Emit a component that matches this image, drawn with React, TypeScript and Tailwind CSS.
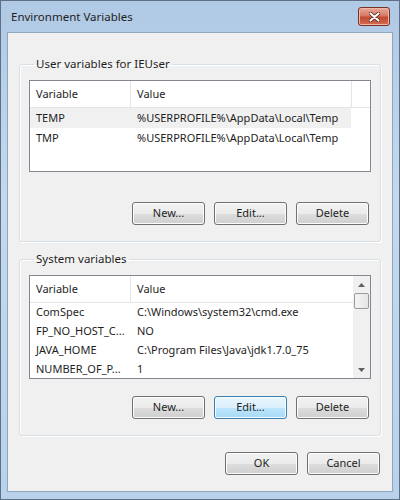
import type { ReactNode } from "react";

const font = "font-['Segoe_UI','Noto_Sans',sans-serif] text-[11px] text-[#1e1e1e]";

const btn =
  "flex h-[23px] w-[73px] items-center justify-center rounded-[3px] border border-[#707070] bg-[linear-gradient(to_bottom,#f2f2f2_0%,#ebebeb_50%,#dddddd_51%,#cfcfcf_100%)] shadow-[inset_0_0_0_1px_#fcfcfc]";
const btnFocus =
  "flex h-[23px] w-[73px] items-center justify-center rounded-[3px] border border-[#3c7fb1] bg-[linear-gradient(to_bottom,#eaf6fd_0%,#d9f0fc_50%,#bee6fd_51%,#a7d9f5_100%)] shadow-[inset_0_0_0_1px_#f4fbfe]";

type Row = { name: string; value: string; selected?: boolean };

const userVars: Row[] = [
  { name: "TEMP", value: "%USERPROFILE%\\AppData\\Local\\Temp", selected: true },
  { name: "TMP", value: "%USERPROFILE%\\AppData\\Local\\Temp" },
];

const systemVars: Row[] = [
  { name: "ComSpec", value: "C:\\Windows\\system32\\cmd.exe" },
  { name: "FP_NO_HOST_C...", value: "NO" },
  { name: "JAVA_HOME", value: "C:\\Program Files\\Java\\jdk1.7.0_75" },
  { name: "NUMBER_OF_P...", value: "1" },
];

function Group({ title, children }: { title: string; children: ReactNode }) {
  return (
    <fieldset className="rounded-[3px] border border-[#d5dfe5] px-[9px] pb-[16px] pt-[8px] shadow-[inset_1px_1px_0_#fff,1px_1px_0_#fff]">
      <legend className="ml-[5px] px-[2px] text-[11.5px] leading-[16px]">{title}</legend>
      {children}
    </fieldset>
  );
}

function Header() {
  return (
    <div className="flex h-[27px] border-b border-[#e5e5e5] bg-white">
      <div className="flex w-[101px] items-center border-r border-[#e5e5e5] pl-[6px]">Variable</div>
      <div className="flex flex-1 items-center pl-[6px]">Value</div>
    </div>
  );
}

function Rows({ rows, h }: { rows: Row[]; h: string }) {
  return (
    <>
      {rows.map((r) => (
        <div
          key={r.name}
          className={`flex ${h} items-center whitespace-nowrap ${r.selected ? "bg-[#f0f0f0]" : ""}`}
        >
          <div className="w-[101px] pl-[6px]">{r.name}</div>
          <div className="flex-1 pl-[6px]">{r.value}</div>
        </div>
      ))}
    </>
  );
}

function Buttons({ focusEdit }: { focusEdit?: boolean }) {
  return (
    <div className="flex justify-end gap-[9px] pr-[2px]">
      <div className={btn}>New...</div>
      <div className={focusEdit ? btnFocus : btn}>Edit...</div>
      <div className={btn}>Delete</div>
    </div>
  );
}

function Arrow({ up }: { up?: boolean }) {
  return (
    <div className="flex h-[17px] items-center justify-center">
      <svg width="7" height="4" viewBox="0 0 7 4">
        <path d={up ? "M0 4 L3.5 0 L7 4 Z" : "M0 0 L3.5 4 L7 0 Z"} fill="#606060" />
      </svg>
    </div>
  );
}

export default function App() {
  return (
    <div className={`${font} flex h-[500px] w-[400px] flex-col border border-[#5d7085] bg-[linear-gradient(to_bottom,#b0c9e4,#c4d9ef_40%,#b9d1ea)]`}>
      <div className="flex h-[31px] shrink-0 items-center justify-between pl-[10px] pr-[9px]">
        <span className="text-[11.5px]">Environment Variables</span>
        <div className="flex h-[19px] w-[32px] items-center justify-center rounded-[3px] border border-[#763226] bg-[linear-gradient(to_bottom,#e9a999_0%,#d77a66_45%,#c34a33_55%,#d26b4f_100%)] shadow-[inset_0_0_0_1px_#f0b6a6]">
          <svg width="11" height="10" viewBox="0 0 11 10">
            <path d="M1.5 1.5 L9.5 8.5 M9.5 1.5 L1.5 8.5" stroke="#4a1a12" strokeWidth="3.6" strokeLinecap="round" />
            <path d="M1.5 1.5 L9.5 8.5 M9.5 1.5 L1.5 8.5" stroke="#ffffff" strokeWidth="2.2" strokeLinecap="round" />
          </svg>
        </div>
      </div>
      <div className="mx-[6px] mb-[7px] flex flex-1 flex-col border border-[#8fa6bf] bg-[#f0f0f0] px-[11px] pt-[23px]">
        <Group title="User variables for IEUser">
          <div className="flex h-[92px] border border-[#828790] bg-white">
            <div className="w-[321px]">
              <Header />
              <Rows rows={userVars} h="h-[20px]" />
            </div>
            <div className="h-[27px] flex-1 border-b border-l border-[#e5e5e5] bg-white" />
          </div>
          <div className="mt-[30px]">
            <Buttons />
          </div>
        </Group>
        <div className="mt-[9px]">
          <Group title="System variables">
            <div className="flex h-[104px] border border-[#828790] bg-white">
              <div className="flex-1 overflow-hidden">
                <Header />
                <Rows rows={systemVars} h="h-[19px]" />
              </div>
              <div className="flex w-[17px] flex-col bg-[#f0f0f0]">
                <Arrow up />
                <div className="mx-[1px] h-[16px] rounded-[2px] border border-[#9a9a9a] bg-[linear-gradient(to_right,#f4f4f4,#e6e6e6)]" />
                <div className="flex-1" />
                <Arrow />
              </div>
            </div>
            <div className="mt-[17px]">
              <Buttons focusEdit />
            </div>
          </Group>
        </div>
        <div className="mt-[16px] flex justify-end gap-[9px] pr-[1px]">
          <div className={btn}>OK</div>
          <div className={btn}>Cancel</div>
        </div>
      </div>
    </div>
  );
}
